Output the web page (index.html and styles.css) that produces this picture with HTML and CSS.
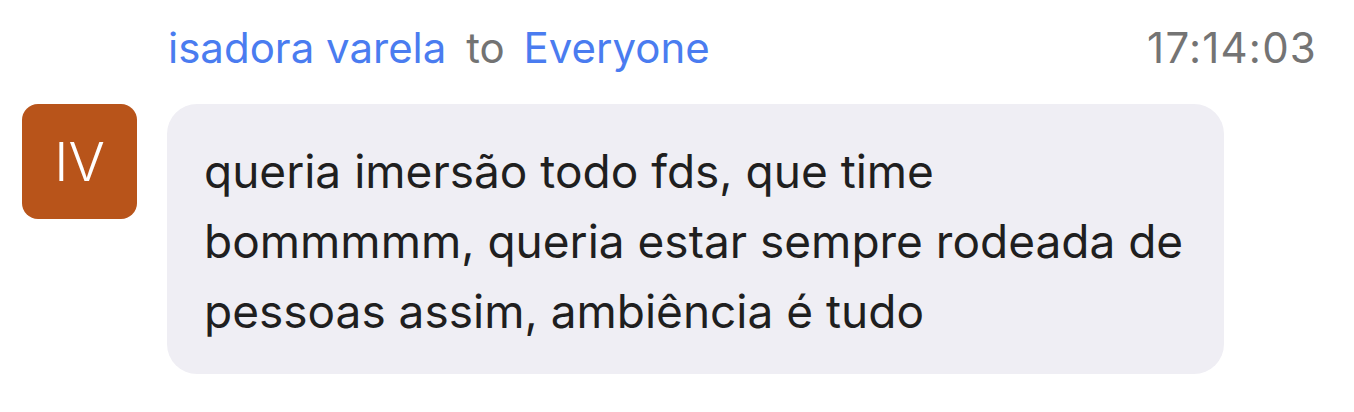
FILE: index.html
```html
<!DOCTYPE html>
<html lang="en">
<head>
    <meta charset="UTF-8">
    <title>Chat</title>
    <link rel="stylesheet" href="styles.css">
</head>
<body>
    <div class="message">
        <div class="message-header">
            <div class="sender">
                <span class="name">isadora varela</span>
                <span class="to">to</span>
                <span class="name">Everyone</span>
            </div>
            <div class="time">17:14:03</div>
        </div>
        <div class="message-body">
            <div class="avatar">IV</div>
            <div class="bubble">queria imersão todo fds, que time<br>bommmmm, queria estar sempre rodeada de pessoas assim, ambiência é tudo</div>
        </div>
    </div>
</body>
</html>
```

FILE: styles.css
```css
html, body {
    margin: 0;
    background: #ffffff;
}

body {
    font-family: Inter, 'Noto Sans', sans-serif;
}

.message {
    padding: 24px 38px 0 22px;
}

.message-header {
    display: flex;
    justify-content: space-between;
    align-items: center;
    padding-left: 146px;
    font-size: 42px;
    line-height: 48px;
}

.name {
    color: #4a7cf0;
}

.to {
    color: #737373;
    margin: 0 7px 0 8px;
}

.time {
    color: #747474;
    letter-spacing: 1.2px;
    margin-right: -1px;
}

.message-body {
    display: flex;
    align-items: flex-start;
    gap: 30px;
    margin-top: 32px;
}

.avatar {
    width: 115px;
    height: 115px;
    border-radius: 16px;
    background: #b8541a;
    color: #ffffff;
    font-size: 54px;
    font-weight: 300;
    display: flex;
    justify-content: center;
    align-items: center;
    flex-shrink: 0;
}

.bubble {
    width: 983px;
    padding: 32px 37px 28px;
    background: #efeef4;
    border-radius: 30px;
    color: #1f1f1f;
    font-size: 46px;
    line-height: 70px;
}
```
